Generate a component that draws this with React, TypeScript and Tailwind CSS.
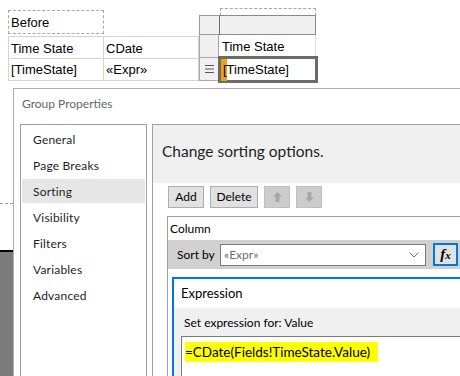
const seg = "font-['Lato','Noto_Sans',sans-serif]";

function BlockArrow({ down = false }: { down?: boolean }) {
  return (
    <svg width="9" height="10" viewBox="0 0 9 10" className={down ? "rotate-180" : ""}>
      <polygon points="4.5,0 9,4.5 6.5,4.5 6.5,10 2.5,10 2.5,4.5 0,4.5" fill="#a8a8a8" />
    </svg>
  );
}

export default function App() {
  const navItems = ["General", "Page Breaks", "Sorting", "Visibility", "Filters", "Variables", "Advanced"];

  return (
    <div className="relative h-[376px] w-[460px] overflow-hidden bg-white font-['Liberation_Sans',Arial,sans-serif]">
      {/* Report design surface */}
      <div className="flex h-[88px]">
        <div className="ml-[8px] pt-[10px]">
          <div className="flex h-[24px] w-[96px] items-center border border-dashed border-[#a6a6a6] pl-[2px] pt-[1px] text-[13px] text-black">
            Before
          </div>
          <div className="mt-[2px] grid grid-cols-[95px_95px] border-l border-t border-[#d3d3d3] text-[13px] text-black">
            <div className="flex h-[22px] items-center border-b border-r border-[#d3d3d3] pl-[2px] pt-[2px]">Time State</div>
            <div className="flex h-[22px] items-center border-b border-r border-[#d3d3d3] pl-[2px] pt-[2px]">CDate</div>
            <div className="flex h-[22px] items-center border-b border-r border-[#d3d3d3] pl-[2px] pt-[1px]">[TimeState]</div>
            <div className="flex h-[22px] items-center border-b border-r border-[#d3d3d3] pl-[2px] pt-[1px]">«Expr»</div>
          </div>
        </div>

        <div className="relative pt-[15px]">
          <div className="absolute left-[21px] top-[8px] h-[26px] w-[96px] border border-dashed border-[#a6a6a6]" />
          <div className="relative grid grid-cols-[20px_97px] text-[13px] text-black">
            <div className="h-[20px] border border-r-0 border-[#9a9a9a] bg-[#f0f0f0]" />
            <div className="h-[20px] border border-[#8a8a8a] border-l-[#6e6e6e] bg-[#f0f0f0]" />
            <div className="h-[23px] border-x border-b border-[#a8a8a8] bg-[#f0f0f0]" />
            <div className="flex h-[23px] items-center border-b border-r border-[#e0e0e0] pl-[3px] pt-[2px]">Time State</div>
            <div className="flex h-[23px] items-center justify-center border-x border-b border-[#a8a8a8] bg-[#f0f0f0]">
              <svg width="9" height="8" viewBox="0 0 9 8">
                <path d="M0 0.5h9M0 4h9M0 7.5h9" stroke="#555" strokeWidth="1" />
              </svg>
            </div>
            <div className="relative flex h-[23px] items-center pl-[4px]">
              <div className="absolute -bottom-[2px] -left-[1px] -right-[2px] -top-[2px] border-[3px] border-[#6b6b6b]" />
              <div className="absolute bottom-0 left-[2px] top-[1px] w-[6px] bg-[#f0a30a]" />
              <span className="relative">[TimeState]</span>
            </div>
          </div>
        </div>
      </div>

      <div className="flex">
        {/* Background strip left of the dialog */}
        <div className="flex w-[13px] shrink-0 flex-col">
          <div className="h-[115px]" />
          <div className="border-t border-dashed border-[#9a9a9a]" />
          <div className="h-[46px]" />
          <div className="h-[2px] bg-black" />
          <div className="h-[200px] bg-[#7b7b7b]" />
        </div>

        {/* Group Properties dialog */}
        <div className={`w-[460px] shrink-0 border-l border-t border-[#acacac] bg-white ${seg}`}>
          <div className="flex h-[30px] items-center pl-[8px] text-[12px] text-[#666]">Group Properties</div>

          <div className="flex gap-[5px] pl-[6px] pt-[5px]">
            <div className="h-[300px] w-[127px] shrink-0 border border-[#a0a0a0] px-[1px] pt-[1px]">
              {navItems.map((item) => (
                <div key={item} className="py-[1px]">
                  <div
                    className={`flex h-[24px] items-center pl-[11px] pt-[1px] text-[12px] tracking-[0.2px] text-[#1e1e1e] ${
                      item === "Sorting" ? "bg-[#e6e6e6]" : ""
                    }`}
                  >
                    {item}
                  </div>
                </div>
              ))}
            </div>

            <div className="h-[300px] w-[330px] shrink-0 border border-[#a0a0a0]">
              <div className="flex h-[58px] items-center bg-[#f0f0f0] pb-[4px] pl-[9px] text-[15.5px] text-[#1e1e1e]">
                Change sorting options.
              </div>

              <div className="flex gap-[6px] pl-[15px] pt-[3px] text-[12px] text-black">
                <div className="flex h-[22px] w-[36px] items-center justify-center border border-[#adadad] bg-[#e1e1e1]">Add</div>
                <div className="flex h-[22px] w-[48px] items-center justify-center border border-[#adadad] bg-[#e1e1e1]">Delete</div>
                <div className="flex h-[22px] w-[26px] items-center justify-center border border-[#bfbfbf] bg-[#cccccc]">
                  <BlockArrow />
                </div>
                <div className="flex h-[22px] w-[26px] items-center justify-center border border-[#bfbfbf] bg-[#cccccc]">
                  <BlockArrow down />
                </div>
              </div>

              <div className="ml-[14px] mt-[8px] h-[200px] border border-[#a0a0a0]">
                <div className="flex h-[23px] items-center pl-[2px] text-[12px] text-black">Column</div>
                <div className="flex h-[29px] items-center bg-[#d0d0d0] pl-[9px] text-[12px] text-black">
                  <span className="w-[43px]">Sort by</span>
                  <div className="flex h-[22px] w-[206px] items-center justify-between border border-[#7a7a7a] bg-white pl-[3px] pr-[6px] text-[#6d6d6d]">
                    <span>«Expr»</span>
                    <svg width="10" height="6" viewBox="0 0 10 6">
                      <path d="M0.5 0.5l4.5 4.5 4.5-4.5" fill="none" stroke="#6d6d6d" strokeWidth="1" />
                    </svg>
                  </div>
                  <div className="ml-[7px] flex h-[23px] w-[25px] items-center justify-center border-2 border-[#0078d7] bg-[#e1e1e1]">
                    <span className="font-['Liberation_Serif',serif] text-[15px] font-bold italic leading-none text-black">
                      f<span className="text-[11px]">x</span>
                    </span>
                  </div>
                </div>

                <div className="ml-[4px] mt-[8px] h-[120px] border-2 border-[#0078d7] bg-[#f0f0f0]">
                  <div className="flex h-[29px] items-center bg-white pl-[7px] text-[13px] text-black">Expression</div>
                  <div className="pl-[10px] pt-[6px] text-[12px] text-black">Set expression for: Value</div>
                  <div className="ml-[7px] mt-[4px] h-[60px] border border-[#7a7a7a] bg-white pl-[3px] pt-[2px]">
                    <span className="bg-[#ffff00] py-[2px] pr-[8px] text-[13.5px] text-black">=CDate(Fields!TimeState.Value)</span>
                  </div>
                </div>
              </div>
            </div>
          </div>
        </div>
      </div>
    </div>
  );
}
